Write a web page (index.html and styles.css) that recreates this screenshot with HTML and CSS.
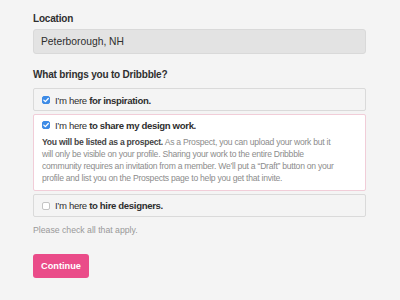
FILE: index.html
```html
<!DOCTYPE html>
<html>
<head>
<meta charset="utf-8">
<link rel="stylesheet" href="styles.css">
</head>
<body>
<form class="form">
  <label class="label">Location</label>
  <div class="input">Peterborough, NH</div>

  <label class="label question">What brings you to Dribbble?</label>
  <div class="options">
    <div class="option">
      <div class="option-head">
        <span class="check checked"><svg viewBox="0 0 8 8" width="8" height="8"><path d="M1.8 4.1 L3.4 5.6 L6.3 2.5" fill="none" stroke="#fff" stroke-width="1.3" stroke-linecap="round" stroke-linejoin="round"/></svg></span>
        <span class="option-title">I’m here <b>for inspiration.</b></span>
      </div>
    </div>
    <div class="option active">
      <div class="option-head">
        <span class="check checked"><svg viewBox="0 0 8 8" width="8" height="8"><path d="M1.8 4.1 L3.4 5.6 L6.3 2.5" fill="none" stroke="#fff" stroke-width="1.3" stroke-linecap="round" stroke-linejoin="round"/></svg></span>
        <span class="option-title">I’m here <b>to share my design work.</b></span>
      </div>
      <p class="desc"><b>You will be listed as a prospect.</b> As a Prospect, you can upload your work but it<br>will only be visible on your profile. Sharing your work to the entire Dribbble<br>community requires an invitation from a member. We’ll put a “Draft” button on your<br>profile and list you on the Prospects page to help you get that invite.</p>
    </div>
    <div class="option last">
      <div class="option-head">
        <span class="check"></span>
        <span class="option-title">I’m here <b>to hire designers.</b></span>
      </div>
    </div>
  </div>
  <p class="hint">Please check all that apply.</p>
  <button type="button" class="btn">Continue</button>
</form>
</body>
</html>
```

FILE: styles.css
```css
html, body {
  margin: 0;
  padding: 0;
  background: #f4f4f4;
}
body {
  font-family: "Liberation Sans", Arial, sans-serif;
  color: #333;
}
.form {
  display: flex;
  flex-direction: column;
  align-items: flex-start;
  width: 333px;
  padding: 13px 0 0 33px;
}
.label {
  font-size: 10px;
  font-weight: bold;
  letter-spacing: -0.2px;
  color: #2f2f2f;
  line-height: 12px;
}
.input {
  box-sizing: border-box;
  width: 333px;
  height: 25px;
  margin-top: 4px;
  padding: 0 7px;
  background: #e3e3e3;
  border: 1px solid #d9d9d9;
  border-radius: 3px;
  font-size: 10.3px;
  line-height: 23px;
  color: #2e2e2e;
}
.question {
  margin-top: 15px;
}
.options {
  display: flex;
  flex-direction: column;
  gap: 3px;
  width: 333px;
  margin-top: 7px;
}
.option {
  box-sizing: border-box;
  border: 1px solid #dadada;
  border-radius: 2px;
  background: #f4f4f4;
  padding: 5px 8px 4px;
}
.option.active {
  background: #fff;
  border-color: #f1cdd8;
  padding: 4px 8px 5px;
}
.option.last {
  padding: 5px 8px 4px;
}
.option-head {
  display: flex;
  align-items: center;
  gap: 5px;
  height: 12px;
}
.check {
  box-sizing: border-box;
  width: 8px;
  height: 8px;
  border-radius: 2px;
  border: 1px solid #c4c4c4;
  background: #fff;
  display: flex;
}
.check.checked {
  background: #3d8be6;
  border-color: #3d8be6;
}
.check svg {
  margin: -1px;
}
.option-title {
  font-size: 9.6px;
  letter-spacing: -0.35px;
  color: #2e2e2e;
}
.option-title b {
  font-weight: bold;
}
.desc {
  margin: 4.5px 0 0;
  font-size: 8.6px;
  letter-spacing: -0.25px;
  line-height: 12.3px;
  color: #8c8c8c;
  white-space: nowrap;
}
.desc b {
  color: #454545;
}
.hint {
  margin: 8.5px 0 0;
  font-size: 8.7px;
  line-height: 11px;
  color: #999;
}
.btn {
  margin-top: 17.5px;
  width: 56px;
  height: 24px;
  border: none;
  border-radius: 3px;
  background: #ea4c89;
  color: #fff;
  font-family: "Liberation Sans", Arial, sans-serif;
  font-weight: bold;
  font-size: 9.2px;
  padding: 0;
}
```
